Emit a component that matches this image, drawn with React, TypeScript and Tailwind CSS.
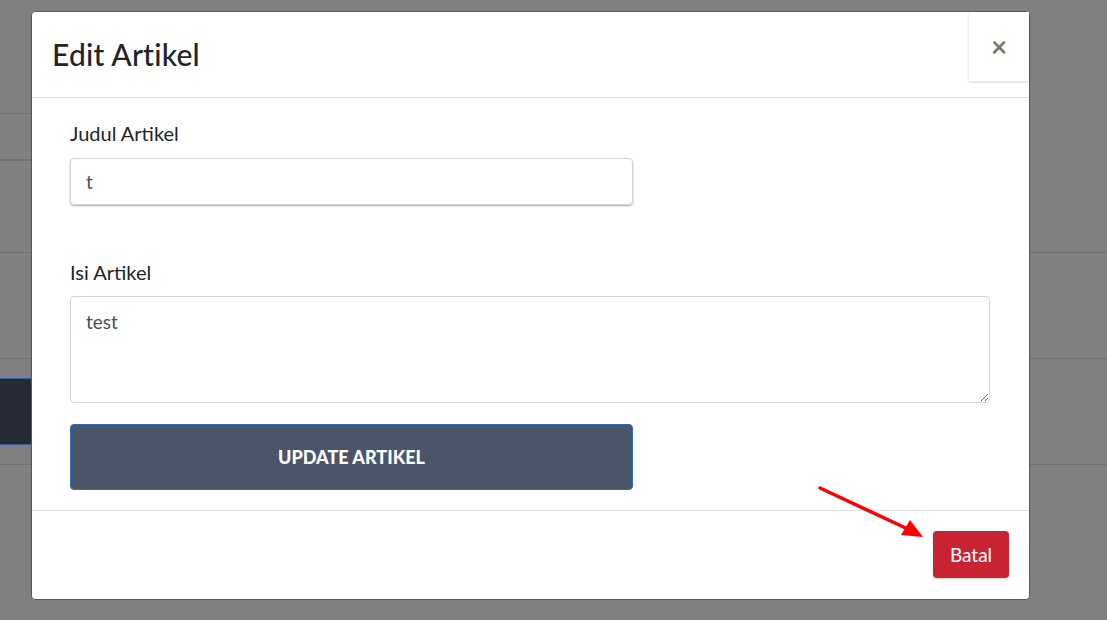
export default function App() {
  return (
    <div className="relative h-[620px] w-full overflow-hidden bg-[#808080] font-['Lato','Noto_Sans',sans-serif]">
      {/* page behind the backdrop */}
      <div className="pt-[113px]">
        <div className="h-[48px] w-[600px] border-t border-b-2 border-[#6f6f6f]" />
        <div className="h-[91px]" />
        <div className="h-[106px] border-t border-[#6f6f6f]" />
        <div className="border-t border-[#6f6f6f] pt-[19px]">
          <div className="h-[67px] w-[300px] border-y border-[#2f5f9e] bg-[#262a35]" />
          <div className="h-[19px]" />
        </div>
        <div className="border-t border-[#6f6f6f]" />
      </div>

      {/* modal */}
      <div className="absolute inset-0 pl-[31px] pt-[11px]">
        <div className="relative flex h-[589px] w-[999px] flex-col rounded-[4px] border border-[#5a5a5a] bg-white">
          <div className="flex h-[86px] shrink-0 items-center border-b border-[#e2e2e2] px-[20px]">
            <h1 className="text-[30px] font-medium tracking-[0.2px] text-[#212529]">Edit Artikel</h1>
          </div>
          <button className="absolute right-0 top-0 flex h-[69px] w-[60px] items-center justify-center bg-white pb-[1px] text-[28px] font-bold leading-none text-[#777] shadow-[0_1px_3px_rgba(0,0,0,0.18)]">
            ×
          </button>

          <div className="flex flex-1 flex-col border-b border-[#e2e2e2] pl-[38px] pt-[22px]">
            <label className="text-[20px] leading-[27px] text-[#212529]">Judul Artikel</label>
            <input
              defaultValue="t"
              className="mt-[11px] h-[47px] w-[563px] rounded-[4px] border border-[#d4d4d4] px-[15px] text-[19px] text-[#495057] shadow-[0_1px_2px_rgba(0,0,0,0.35)] outline-none"
            />
            <label className="mt-[54px] text-[20px] leading-[27px] text-[#212529]">Isi Artikel</label>
            <textarea
              defaultValue="test"
              className="mt-[10px] h-[107px] w-[920px] rounded-[4px] border border-[#d4d4d4] px-[15px] py-[11px] text-[19px] leading-[27px] text-[#495057] outline-none"
            />
            <button className="mt-[21px] h-[66px] w-[563px] rounded-[4px] border border-[#2f6cc2] bg-[#4b5569] text-[18px] font-black uppercase text-white">
              Update Artikel
            </button>
          </div>

          <div className="flex h-[88px] shrink-0 items-start justify-end pr-[20px] pt-[20px]">
            <button className="h-[47px] w-[76px] rounded-[4px] bg-[#c82333] pt-[2px] text-[19px] text-white shadow-[0_1px_2px_rgba(0,0,0,0.2)]">
              Batal
            </button>
          </div>
        </div>
      </div>

      {/* annotation arrow */}
      <svg className="absolute left-[815px] top-[482px]" width="115" height="62" viewBox="0 0 115 62">
        <line x1="5" y1="6" x2="95" y2="48" stroke="#ff0000" strokeWidth="3.5" strokeLinecap="round" />
        <polygon points="108,55 86,53 95,38" fill="#ff0000" />
      </svg>
    </div>
  );
}
